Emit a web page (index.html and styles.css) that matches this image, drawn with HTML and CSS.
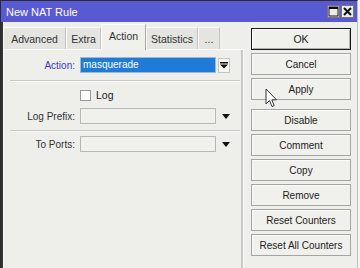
FILE: index.html
```html
<!DOCTYPE html>
<html lang="en">
<head>
    <meta charset="UTF-8">
    <meta name="viewport" content="width=device-width, initial-scale=1.0">
    <title>New NAT Rule</title>
    <link rel="stylesheet" href="styles.css">
</head>
<body>

<div class="window">
    <div class="titlebar">
        <span class="title">New NAT Rule</span>
        <div class="title-buttons">
            <span class="tbtn">
                <svg width="11" height="11" viewBox="0 0 11 11"><rect x="1" y="1" width="9" height="9" fill="none" stroke="#111" stroke-width="1"/><rect x="1" y="1" width="9" height="2" fill="#111"/></svg>
            </span>
            <span class="tbtn">
                <svg width="11" height="11" viewBox="0 0 11 11"><path d="M2 2 L9 9 M9 2 L2 9" stroke="#111" stroke-width="2"/></svg>
            </span>
        </div>
    </div>

    <div class="content">
        <div class="tabs-area">
            <div class="tabs">
                <div class="tab tab-advanced">Advanced</div>
                <div class="tab tab-extra">Extra</div>
                <div class="tab tab-action active">Action</div>
                <div class="tab tab-stats">Statistics</div>
                <div class="tab tab-more">...</div>
            </div>

            <div class="panel">
                <div class="row row-action">
                    <span class="label label-blue">Action:</span>
                    <span class="field selected">masquerade</span>
                    <span class="drop-btn">
                        <svg width="8" height="8" viewBox="0 0 8 8"><rect x="0" y="1" width="8" height="1.5" fill="#111"/><path d="M0 3.5 L8 3.5 L4 7.5 Z" fill="#111"/></svg>
                    </span>
                </div>

                <div class="separator sep-first"></div>

                <div class="row row-check">
                    <span class="label"></span>
                    <span class="checkbox"></span>
                    <span class="check-text">Log</span>
                </div>

                <div class="row row-prefix">
                    <span class="label">Log Prefix:</span>
                    <span class="field"></span>
                    <span class="arrow"></span>
                </div>

                <div class="separator sep-second"></div>

                <div class="row row-ports">
                    <span class="label">To Ports:</span>
                    <span class="field"></span>
                    <span class="arrow"></span>
                </div>
            </div>
        </div>

        <div class="buttons">
            <div class="btn btn-default">OK</div>
            <div class="btn">Cancel</div>
            <div class="btn">Apply</div>
            <div class="btn btn-gap">Disable</div>
            <div class="btn">Comment</div>
            <div class="btn">Copy</div>
            <div class="btn">Remove</div>
            <div class="btn">Reset Counters</div>
            <div class="btn">Reset All Counters</div>
        </div>
    </div>

    <!-- mouse pointer over the Apply button -->
    <svg class="cursor" width="13" height="20" viewBox="0 0 13 20">
        <path d="M1 1 L1 16 L4.5 12.5 L7 18.5 L9.2 17.6 L6.8 11.8 L11.5 11.8 Z" fill="#fff" stroke="#333" stroke-width="1" stroke-linejoin="round"/>
    </svg>
</div>

</body>
</html>
```

FILE: styles.css
```css
body {
    margin: 0;
    padding: 0;
    background-color: #f4f4f2;
    font-family: 'Liberation Sans', Arial, sans-serif;
    font-size: 10px;
    color: #222;
}

.window {
    position: relative;
    width: 358px;
    height: 268px;
    box-sizing: border-box;
    border-top: 1px solid #2b2b2b;
    border-left: 1px solid #2b2b2b;
    border-right: 1px solid #bdbdbd;
    background-color: #eeeeea;
    overflow: hidden;
}

.titlebar {
    height: 21px;
    background-color: #5959d3;
    color: #fff;
    display: flex;
    align-items: center;
    justify-content: space-between;
    padding-left: 5px;
    padding-right: 3px;
}

.title {
    font-size: 11px;
}

.title-buttons {
    display: flex;
    gap: 1px;
}

.tbtn {
    width: 13px;
    height: 13px;
    box-sizing: border-box;
    background-color: #ececec;
    border: 1px solid #777;
    display: flex;
    align-items: center;
    justify-content: center;
}

.content {
    display: flex;
    height: 246px;
    border-left: 2px solid #333;
}

.tabs-area {
    width: 241px;
    display: flex;
    flex-direction: column;
    padding-top: 2px;
}

.tabs {
    display: flex;
    align-items: flex-end;
    height: 25px;
}

.tab {
    height: 22px;
    box-sizing: border-box;
    background-color: #e4e4e0;
    border-top: 1px solid #fafafa;
    border-left: 1px solid #fafafa;
    border-right: 1px solid #c4c4c0;
    display: flex;
    align-items: center;
    justify-content: center;
    font-size: 10.5px;
    color: #333;
}

.tab-advanced { width: 63px; }
.tab-extra { width: 35px; }
.tab-action { width: 45px; }
.tab-stats { width: 52px; }
.tab-more { width: 22px; }

.tab.active {
    position: relative;
    z-index: 1;
    height: 26px;
    margin-bottom: -1px;
    background-color: #f0f0ec;
    border-right-color: #a8a8a4;
    padding-bottom: 3px;
}

.panel {
    flex: 1;
    background-color: #eeeeea;
    border-top: 1px solid #fbfbfb;
    border-left: 1px solid #fbfbfb;
    border-right: 1px solid #fbfbfb;
    box-shadow: inset -2px 0 0 #c8c8c4;
    display: flex;
    flex-direction: column;
}

.row {
    display: flex;
    align-items: center;
    height: 16px;
}

.label {
    width: 71px;
    margin-right: 5px;
    text-align: right;
    color: #333;
}

.label-blue {
    color: #3a3ac6;
}

.field {
    width: 136px;
    height: 16px;
    box-sizing: border-box;
    border: 1px solid #b8b8b4;
    background-color: #f0f0ed;
    padding-left: 2px;
    line-height: 14px;
}

.field.selected {
    background-color: #1f7ad8;
    border-color: #9cb6d4;
    color: #fff;
}

.drop-btn {
    width: 12px;
    height: 15px;
    box-sizing: border-box;
    margin-left: 2px;
    border: 1px solid #c4c4c0;
    background-color: #f6f6f3;
    display: flex;
    align-items: center;
    justify-content: center;
}

.arrow {
    margin-left: 6px;
    width: 0;
    height: 0;
    border-left: 4.5px solid transparent;
    border-right: 4.5px solid transparent;
    border-top: 5px solid #111;
}

.row-action {
    margin-top: 7px;
}

.separator {
    height: 1px;
    margin-left: 6px;
    margin-right: 3px;
    background-color: #c8c8c4;
    border-bottom: 1px solid #fafafa;
}

.sep-first {
    margin-top: 7px;
}

.row-check {
    height: 12px;
    margin-top: 7px;
}

.checkbox {
    width: 11px;
    height: 11px;
    box-sizing: border-box;
    border: 1px solid #9a9a98;
    background-color: #fff;
}

.check-text {
    margin-left: 5px;
    font-size: 10.5px;
}

.row-prefix {
    margin-top: 7px;
}

.sep-second {
    margin-top: 6px;
}

.row-ports {
    margin-top: 4px;
}

.buttons {
    width: 100px;
    margin-left: 7px;
    padding-top: 6px;
    display: flex;
    flex-direction: column;
    gap: 3px;
}

.btn {
    height: 22px;
    box-sizing: border-box;
    border: 1px solid #a4a4a0;
    background-color: #f0f0ec;
    box-shadow: inset 1px 1px 0 #fbfbfb;
    display: flex;
    align-items: center;
    justify-content: center;
    color: #222;
}

.btn-default {
    border-color: #1a1a1a;
    box-shadow: inset 1px 1px 0 #fbfbfb, inset -1px -1px 0 #b0b0ac;
    font-size: 10.5px;
}

.btn-gap {
    margin-top: 6px;
}

.cursor {
    position: absolute;
    left: 264px;
    top: 87px;
}
```
